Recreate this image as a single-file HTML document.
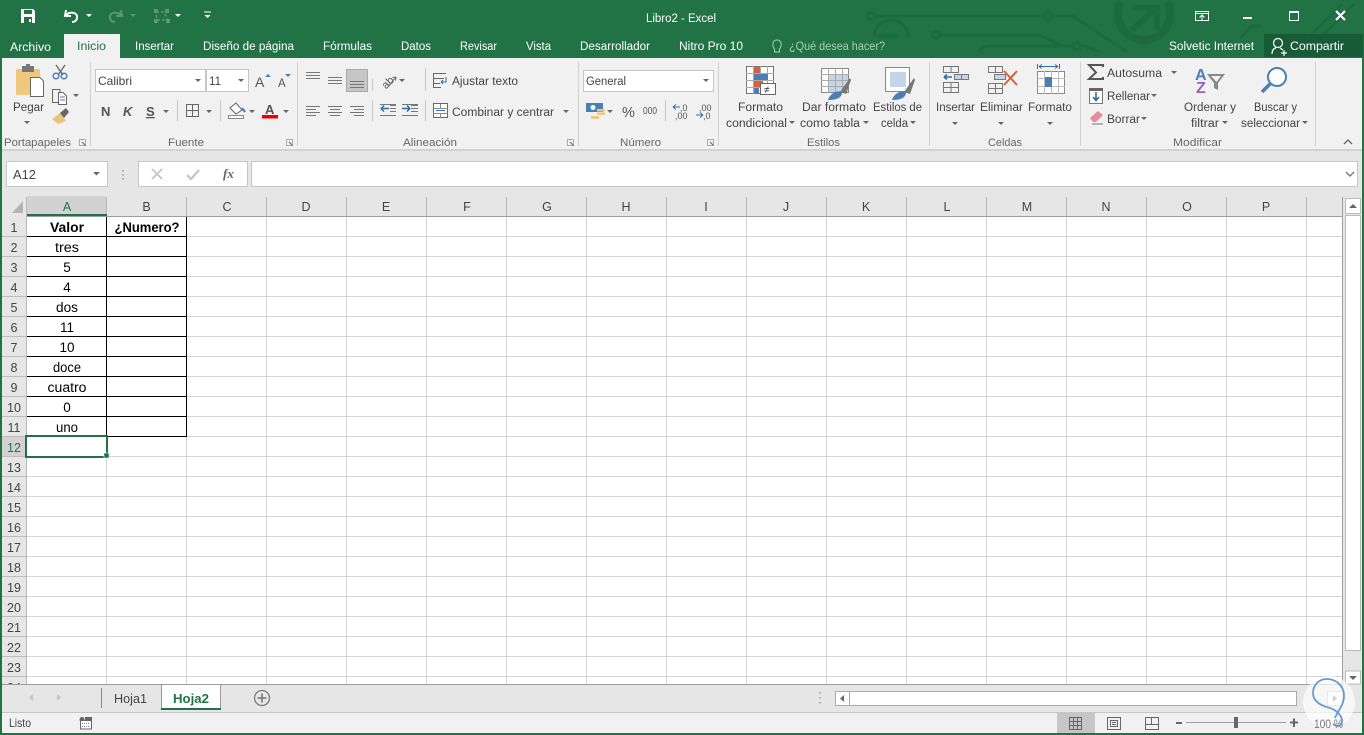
<!DOCTYPE html>
<html><head><meta charset="utf-8"><title>Libro2 - Excel</title>
<style>
html,body{margin:0;padding:0;background:#fff;overflow:hidden}
svg{display:block;font-family:"Liberation Sans",sans-serif}
.r{font-size:11.5px;fill:#444}
.g{font-size:11px;fill:#666}
.t{font-size:11.5px;fill:#fff}
.c{font-size:13.5px;fill:#000;text-anchor:middle}
.h{font-size:12.5px;fill:#444;text-anchor:middle}
.gr{fill:none;stroke:#777;stroke-width:1}
.bl{fill:none;stroke:#4a7fb5;stroke-width:1.5}
</style></head><body>
<svg width="1364" height="735" viewBox="0 0 1364 735" xmlns="http://www.w3.org/2000/svg">
<defs>
<path id="a" d="M-3 0h6l-3 3z" fill="#666"/>
<path id="w" d="M-3 0h6l-3 3z" fill="#fff"/>
<path id="ln" d="M0 .5h14M0 3.5h14M0 6.5h14" fill="none" stroke="#777"/>
</defs>
<rect width="1364" height="735" fill="#fff"/>

<!-- title bar -->
<rect width="1364" height="58" fill="#217346"/>
<g fill="none" stroke="#1e6a40" stroke-width="3">
<path d="M874 16H1045M1051 16H1073L1127 52"/><circle cx="871" cy="16" r="3.5"/><circle cx="1048" cy="16" r="3.5"/>
<path d="M940 35H1040L1062 46"/><circle cx="936" cy="35" r="3.5"/>
<path d="M979 52Q981 46 990 46H1073M1081 46H1086L1098 52"/><circle cx="1077" cy="46" r="3.5"/>
<path d="M874 37A17 17 0 0 1 908 37"/>
<path d="M878 36H898" stroke-width="4"/>
<path d="M1121 2A26 26 0 1 0 1167 2" stroke-width="8"/>
<path d="M1132 30L1155 9M1132 7.500H1157V30" stroke-width="6"/>
<path d="M1240 38L1252 26H1262M1310 36L1342 4M1322 36L1354 4"/>
</g>

<!-- QAT -->
<path d="M21 9H33L35 11V23H21Z" fill="#fff"/><rect x="24" y="10" width="8" height="4" fill="#217346"/><rect x="24" y="17" width="8" height="6" fill="#217346"/><rect x="29" y="19" width="2" height="3" fill="#fff"/>
<path d="M66 10L65 16H71M65.500 15.500C70 11 78 12 77 18C76.500 21 74 22 72 22" fill="none" stroke="#fff" stroke-width="2"/>
<use href="#w" x="89" y="14"/>
<path d="M121 10L122 16H116M121.500 15.500C117 11 109 12 110 18C110.500 21 113 22 115 22" fill="none" stroke="#5d9778" stroke-width="2"/>
<path d="M130 14h6l-3 3z" fill="#5d9778"/>
<path d="M156 12H164L168 20H157Z" fill="none" stroke="#5d9778" stroke-width="1.500" stroke-dasharray="3 2"/>
<rect x="154" y="9" width="4" height="4" fill="#5d9778"/><rect x="165" y="9" width="4" height="4" fill="#5d9778"/><rect x="154" y="19" width="4" height="4" fill="#5d9778"/><rect x="166" y="19" width="4" height="4" fill="#5d9778"/>
<use href="#w" x="178" y="14"/>
<path d="M204 12H211" stroke="#fff"/><use href="#w" x="207.500" y="15"/>

<text x="646" y="22" class="t" textLength="70" lengthAdjust="spacingAndGlyphs">Libro2 - Excel</text>
<!-- window controls -->
<rect x="1195.500" y="11.500" width="13" height="9" fill="none" stroke="#fff"/><path d="M1195 13.500H1209" stroke="#fff"/><path d="M1202 20V15M1199.500 17.500L1202 15L1204.500 17.500" fill="none" stroke="#fff"/>
<rect x="1243" y="17" width="9" height="2" fill="#fff"/>
<rect x="1289.500" y="11.500" width="9" height="9" fill="none" stroke="#fff"/><rect x="1289" y="11" width="10" height="2" fill="#fff"/>
<path d="M1336 11L1345 20M1345 11L1336 20" stroke="#fff" stroke-width="2"/>

<!-- tabs -->
<rect x="64" y="34" width="56" height="24" fill="#f1f1f1"/>
<text x="10" y="51" class="t" textLength="41" lengthAdjust="spacingAndGlyphs">Archivo</text>
<text x="77" y="50" class="t" style="fill:#217346" textLength="29" lengthAdjust="spacingAndGlyphs">Inicio</text>
<text x="135" y="50" class="t" textLength="39" lengthAdjust="spacingAndGlyphs">Insertar</text>
<text x="203" y="50" class="t" textLength="91" lengthAdjust="spacingAndGlyphs">Diseño de página</text>
<text x="323" y="50" class="t" textLength="49" lengthAdjust="spacingAndGlyphs">Fórmulas</text>
<text x="401" y="50" class="t" textLength="30" lengthAdjust="spacingAndGlyphs">Datos</text>
<text x="460" y="50" class="t" textLength="37" lengthAdjust="spacingAndGlyphs">Revisar</text>
<text x="526" y="50" class="t" textLength="25" lengthAdjust="spacingAndGlyphs">Vista</text>
<text x="580" y="50" class="t" textLength="70" lengthAdjust="spacingAndGlyphs">Desarrollador</text>
<text x="679" y="50" class="t" textLength="64" lengthAdjust="spacingAndGlyphs">Nitro Pro 10</text>
<path d="M774.500 49C772 46 772 40 777 40C782 40 782 46 779.500 49V52H774.500Z" fill="none" stroke="#a9cdb9"/>
<text x="789" y="50" class="t" style="fill:#a9cdb9" textLength="96" lengthAdjust="spacingAndGlyphs">¿Qué desea hacer?</text>
<text x="1169" y="50" class="t" textLength="85" lengthAdjust="spacingAndGlyphs">Solvetic Internet</text>
<rect x="1264" y="34" width="99" height="23" fill="#185c37"/>
<circle cx="1278" cy="43" r="4.500" fill="none" stroke="#fff" stroke-width="1.200"/><path d="M1272 54C1272 50 1274 48 1276 48M1280 48L1283 50M1281 53H1287M1284 50V56" fill="none" stroke="#fff" stroke-width="1.200"/>
<text x="1290" y="50" class="t" textLength="54" lengthAdjust="spacingAndGlyphs">Compartir</text>

<!-- ribbon -->
<rect x="0" y="58" width="1364" height="92" fill="#f1f1f1"/>
<rect x="0" y="149" width="1364" height="2" fill="#d2d2d2"/>
<rect x="0" y="151" width="1364" height="45" fill="#e6e6e6"/>
<path d="M90.500 62V146M297.500 62V146M578.500 62V146M718.500 62V146M929.500 62V146M1080.500 62V146M1315.500 62V146" stroke="#d0d0d0"/>

<!-- Portapapeles -->
<rect x="16" y="69" width="24" height="26" rx="1" fill="#efc880"/>
<rect x="22" y="66" width="12" height="6" fill="#777"/><rect x="26" y="64" width="4" height="3" fill="#777"/>
<path d="M30.500 77.500H40L43.500 81V96.500H30.500Z" fill="#fff" stroke="#666"/>
<text x="13" y="111" class="r" textLength="31" lengthAdjust="spacingAndGlyphs">Pegar</text>
<use href="#a" x="27" y="121"/>
<path d="M56 65L63 75M65 65L58 75" stroke="#666" stroke-width="1.300"/><circle cx="56" cy="76" r="2.800" class="bl" stroke-width="1.200"/><circle cx="64" cy="76" r="2.800" class="bl" stroke-width="1.200"/>
<path d="M52.500 89.500H60V102.500H52.500Z" fill="#f1f1f1" stroke="#666"/><path d="M58.500 92.500H63L66.500 96V104.500H58.500Z" fill="#fff" stroke="#666"/><path d="M60 97H65M60 100H65" stroke="#4a7fb5"/>
<use href="#a" x="76" y="94"/>
<path d="M52 119L60 113L66 121L58 124Z" fill="#e9c27b"/><path d="M60 113L66 108L69 112L64 118Z" fill="#666"/>
<text x="4" y="146" class="g" textLength="67" lengthAdjust="spacingAndGlyphs">Portapapeles</text>
<path d="M79.500 139.500H85.500V145.500H79.500Z" fill="none" stroke="#aaa"/><path d="M82 142L85.500 145.500" stroke="#666"/>

<!-- Fuente -->
<rect x="95.500" y="69.500" width="110" height="22" fill="#fff" stroke="#c6c6c6"/>
<rect x="206.500" y="69.500" width="42" height="22" fill="#fff" stroke="#c6c6c6"/>
<text x="98" y="85" class="r" style="font-size:12px" textLength="34" lengthAdjust="spacingAndGlyphs">Calibri</text>
<text x="209" y="85" class="r" style="font-size:12px" textLength="12" lengthAdjust="spacingAndGlyphs">11</text>
<use href="#a" x="198" y="79"/><use href="#a" x="241" y="79"/>
<text x="255" y="87" style="font-size:14px;fill:#555" >A</text><path d="M265 77l3-3 3 3z" fill="#4a7fb5"/>
<text x="278" y="87" style="font-size:11.500px;fill:#555">A</text><path d="M285 74h6l-3 3z" fill="#4a7fb5"/>
<text x="101" y="116" style="font-size:13px;font-weight:bold;fill:#555">N</text>
<text x="123" y="116" style="font-size:13px;font-weight:bold;font-style:italic;fill:#555">K</text>
<text x="146" y="116" style="font-size:13px;font-weight:bold;fill:#555;text-decoration:underline">S</text>
<use href="#a" x="166" y="110"/><path d="M177.500 100V121" stroke="#c6c6c6"/>
<path d="M186.500 104.500H198.500V116.500H186.500ZM192.500 104V117M186 110.500H199" fill="none" stroke="#666"/><use href="#a" x="209" y="110"/><path d="M220.500 100V121" stroke="#c6c6c6"/>
<path d="M230 108L236 103L242 110L236 114Z" fill="#fff" stroke="#666"/><path d="M242 108L245 112" stroke="#4a7fb5" stroke-width="2"/><rect x="228.500" y="115.500" width="15" height="3" fill="#fff" stroke="#888"/>
<use href="#a" x="252" y="110"/>
<text x="265" y="114" style="font-size:13px;font-weight:bold;fill:#555">A</text><rect x="262" y="115" width="16" height="3.500" fill="#e00"/>
<use href="#a" x="286" y="110"/>
<text x="168" y="146" class="g" textLength="36" lengthAdjust="spacingAndGlyphs">Fuente</text>
<path d="M286.500 139.500H292.500V145.500H286.500Z" fill="none" stroke="#aaa"/><path d="M289 142L292.500 145.500" stroke="#666"/>

<!-- Alineación -->
<use href="#ln" x="306" y="72"/><use href="#ln" x="328" y="77"/>
<rect x="346.500" y="69.500" width="21" height="22" fill="#c6c6c6" stroke="#aaa"/>
<use href="#ln" x="350" y="81"/>
<path d="M372.500 79V91M372.500 100V121M425.500 68V91M425.500 100V121" stroke="#c6c6c6"/>
<text x="380" y="87" transform="rotate(-45 386 81)" style="font-size:11px;fill:#555">ab</text><path d="M388 87L396 77M396 77l-3.500 .5M396 77l-.5 3.500" fill="none" stroke="#666"/>
<use href="#a" x="402" y="79"/>
<path d="M306 106.500H320M306 109.500H316M306 112.500H320M306 115.500H316M328 106.500H342M330 109.500H340M328 112.500H342M330 115.500H340M350 106.500H364M354 109.500H364M350 112.500H364M354 115.500H364" stroke="#777"/>
<path d="M390 105.500H396M390 108.500H396M390 111.500H396M380 115.500H396M380 104.500H396" stroke="#777"/><path d="M381 108.500H389M381 108.500l3-3M381 108.500l3 3" fill="none" stroke="#2f6ea8" stroke-width="1.500"/>
<path d="M411 105.500H418M411 108.500H418M411 111.500H418M402 115.500H418M402 104.500H418" stroke="#777"/><path d="M402 108.500H410M410 108.500l-3-3M410 108.500l-3 3" fill="none" stroke="#2f6ea8" stroke-width="1.500"/>
<path d="M433.500 73.500H446M433.500 78.500H444M433.500 83.500H440M433.500 73V87.500H441" fill="none" stroke="#666"/><path d="M446 77V82H441M441 82l2-2M441 82l2 2" fill="none" stroke="#2f6ea8"/>
<text x="452" y="85" class="r" textLength="66" lengthAdjust="spacingAndGlyphs">Ajustar texto</text>
<rect x="433.500" y="103.500" width="14" height="14" fill="#fff" stroke="#666"/><path d="M433 108.500H448M433 113.500H448M440.500 104V108M440.500 114V118" stroke="#888"/><path d="M436 110.500H445" stroke="#2f6ea8"/>
<text x="452" y="116" class="r" textLength="102" lengthAdjust="spacingAndGlyphs">Combinar y centrar</text>
<use href="#a" x="566" y="110"/>
<text x="403" y="146" class="g" textLength="54" lengthAdjust="spacingAndGlyphs">Alineación</text>
<path d="M567.500 139.500H573.500V145.500H567.500Z" fill="none" stroke="#aaa"/><path d="M570 142L573.500 145.500" stroke="#666"/>

<!-- Número -->
<rect x="583.500" y="70.500" width="130" height="21" fill="#fff" stroke="#c6c6c6"/>
<text x="586" y="85" class="r" textLength="40" lengthAdjust="spacingAndGlyphs">General</text>
<use href="#a" x="706" y="79"/>
<rect x="586" y="103" width="17" height="9" fill="#4a7fb5"/><circle cx="593" cy="107.500" r="2.500" fill="#fff"/>
<rect x="597" y="109" width="8" height="2.500" fill="#efc880"/><rect x="597" y="112.500" width="8" height="2.500" fill="#efc880"/><rect x="591" y="116" width="8" height="3" fill="#efc880"/>
<use href="#a" x="610" y="110"/>
<text x="622" y="117" style="font-size:14.500px;fill:#555">%</text>
<text x="643" y="114" style="font-size:10px;fill:#555" textLength="14" lengthAdjust="spacingAndGlyphs">000</text>
<path d="M665.500 100V121" stroke="#c6c6c6"/>
<text x="680" y="111" style="font-size:9px;fill:#555">,0</text><text x="675" y="119" style="font-size:9px;fill:#555">,00</text><path d="M673 107H680M673 107l3-2.500M673 107l3 2.500" fill="none" stroke="#2f6ea8"/>
<text x="699" y="111" style="font-size:9px;fill:#555">,00</text><text x="703" y="119" style="font-size:9px;fill:#555">,0</text><path d="M696 115H703M703 115l-3-2.500M703 115l-3 2.500" fill="none" stroke="#2f6ea8"/>
<text x="620" y="146" class="g" textLength="41" lengthAdjust="spacingAndGlyphs">Número</text>
<path d="M707.500 139.500H713.500V145.500H707.500Z" fill="none" stroke="#aaa"/><path d="M710 142L713.500 145.500" stroke="#666"/>

<!-- Estilos -->
<rect x="746.500" y="66.500" width="27" height="27" fill="#fff" stroke="#777"/>
<path d="M746 73.500H774M746 80.500H774M746 87.500H774M753.500 66V94M760.500 66V94M767.500 66V94" stroke="#aaa"/>
<rect x="754" y="67" width="6" height="6" fill="#d9603a"/><rect x="754" y="74" width="14" height="6" fill="#4a7fb5"/><rect x="754" y="81" width="9" height="6" fill="#d9603a"/><rect x="754" y="88" width="5" height="6" fill="#4a7fb5"/>
<rect x="760.500" y="83.500" width="15" height="11" fill="#fff" stroke="#666"/><text x="764" y="93" style="font-size:10px;fill:#333">≠</text>
<text x="738" y="111" class="r" textLength="45" lengthAdjust="spacingAndGlyphs">Formato</text>
<text x="726" y="127" class="r" textLength="61" lengthAdjust="spacingAndGlyphs">condicional</text><use href="#a" x="792" y="121"/>
<rect x="821.500" y="68.500" width="27" height="24" fill="#fff" stroke="#888"/><rect x="828" y="74" width="20" height="18" fill="#c5d5e8"/>
<path d="M821 74.500H849M821 80.500H849M821 86.500H849M828.500 68V93M835.500 68V93M842.500 68V93" stroke="#aaa"/>
<path d="M840 92L850 78L851 80L846 94Z" fill="#777"/><path d="M828 100C830 93 838 90 842 92C842 97 838 100 828 100Z" fill="#4a7fb5"/>
<text x="802" y="111" class="r" textLength="64" lengthAdjust="spacingAndGlyphs">Dar formato</text>
<text x="800" y="127" class="r" textLength="60" lengthAdjust="spacingAndGlyphs">como tabla</text><use href="#a" x="866" y="121"/>
<rect x="885.500" y="67.500" width="24" height="24" fill="#fff" stroke="#888"/><rect x="890" y="72" width="16" height="15" fill="#c5d5e8"/>
<path d="M904 92L914 78L915 80L910 94Z" fill="#777"/><path d="M892 100C894 93 902 90 906 92C906 97 902 100 892 100Z" fill="#4a7fb5"/>
<text x="873" y="111" class="r" textLength="49" lengthAdjust="spacingAndGlyphs">Estilos de</text>
<text x="881" y="127" class="r" textLength="27" lengthAdjust="spacingAndGlyphs">celda</text><use href="#a" x="913" y="121"/>
<text x="807" y="146" class="g" textLength="33" lengthAdjust="spacingAndGlyphs">Estilos</text>

<!-- Celdas -->
<path d="M943.500 66.500H958.500V72.500H943.500ZM951 66V72M943.500 82.500H958.500V92.500H943.500ZM951 82V93M943 87.500H959" fill="none" stroke="#777"/>
<rect x="954.500" y="74.500" width="14" height="5" fill="#c5d5e8" stroke="#777"/><path d="M961.500 74V80" stroke="#777"/><path d="M944 77H952M944 77l3-2.500M944 77l3 2.500" fill="none" stroke="#2f6ea8" stroke-width="1.500"/>
<text x="936" y="111" class="r" textLength="39" lengthAdjust="spacingAndGlyphs">Insertar</text><use href="#a" x="955" y="122"/>
<path d="M988.500 66.500H1002.500V72.500H988.500ZM995.500 66V72M988.500 83.500H1002.500V93.500H988.500ZM995.500 83V94M988 88.500H1003" fill="none" stroke="#777"/>
<rect x="994.500" y="74.500" width="11" height="5" fill="#c5d5e8" stroke="#777"/><path d="M1004 71L1017 85M1017 71L1004 85" stroke="#d9603a" stroke-width="2"/>
<text x="980" y="111" class="r" textLength="43" lengthAdjust="spacingAndGlyphs">Eliminar</text><use href="#a" x="1001" y="122"/>
<path d="M1037.500 64V69M1059.500 64V69M1039 66.500H1058M1039 66.500l3-2M1039 66.500l3 2M1058 66.500l-3-2M1058 66.500l-3 2" fill="none" stroke="#2f6ea8"/>
<rect x="1037.500" y="71.500" width="27" height="22" fill="#fff" stroke="#888"/><path d="M1037 78.500H1065M1037 86.500H1065M1044.500 71V94M1051.500 71V94M1058.500 71V94" stroke="#bbb"/><rect x="1045" y="77" width="7" height="10" fill="#4a7fb5"/>
<text x="1028" y="111" class="r" textLength="44" lengthAdjust="spacingAndGlyphs">Formato</text><use href="#a" x="1050" y="122"/>
<text x="988" y="146" class="g" textLength="34" lengthAdjust="spacingAndGlyphs">Celdas</text>

<!-- Modificar -->
<path d="M1103 67V65H1089L1096 72.500L1089 79H1103V77" fill="none" stroke="#555" stroke-width="2"/>
<text x="1107" y="77" class="r" textLength="55" lengthAdjust="spacingAndGlyphs">Autosuma</text><use href="#a" x="1174" y="71"/>
<rect x="1089.500" y="88.500" width="13" height="15" fill="#fff" stroke="#777"/><rect x="1089" y="88" width="14" height="3" fill="#666"/><path d="M1096 92V100M1093 97L1096 100.500L1099 97" fill="none" stroke="#2f6ea8" stroke-width="1.600"/>
<text x="1107" y="100" class="r" textLength="43" lengthAdjust="spacingAndGlyphs">Rellenar</text><use href="#a" x="1154" y="94"/>
<path d="M1090 118L1098 111L1103 115L1096 122H1093Z" fill="#e88c9a"/><path d="M1092 124H1103" stroke="#777"/>
<text x="1107" y="123" class="r" textLength="33" lengthAdjust="spacingAndGlyphs">Borrar</text><use href="#a" x="1144" y="117"/>
<text x="1195" y="80" style="font-size:16px;font-weight:bold;fill:#4a7fb5">A</text>
<text x="1196" y="93" style="font-size:16px;font-weight:bold;fill:#9564b8">Z</text>
<path d="M1207 74H1225L1218 83V90L1214 88V83Z" fill="#888"/><path d="M1211 76H1221L1216.500 82Z" fill="#f1f1f1"/>
<text x="1184" y="111" class="r" textLength="52" lengthAdjust="spacingAndGlyphs">Ordenar y</text>
<text x="1191" y="127" class="r" textLength="28" lengthAdjust="spacingAndGlyphs">filtrar</text><use href="#a" x="1225" y="121"/>
<circle cx="1277" cy="77" r="9" fill="#fff" stroke="#4a7fb5" stroke-width="2"/><path d="M1270 84L1262 92" stroke="#4a7fb5" stroke-width="3.500"/>
<text x="1254" y="111" class="r" textLength="43" lengthAdjust="spacingAndGlyphs">Buscar y</text>
<text x="1241" y="127" class="r" textLength="59" lengthAdjust="spacingAndGlyphs">seleccionar</text><use href="#a" x="1305" y="121"/>
<text x="1173" y="146" class="g" textLength="49" lengthAdjust="spacingAndGlyphs">Modificar</text>
<path d="M1344 144L1348 140L1352 144" fill="none" stroke="#666" stroke-width="1.300"/>

<!-- formula bar -->
<rect x="6.500" y="161.500" width="101" height="25" fill="#fff" stroke="#c6c6c6"/>
<text x="13" y="179" style="font-size:13px;fill:#444" textLength="23" lengthAdjust="spacingAndGlyphs">A12</text>
<path d="M93 172h7l-3.500 3.500z" fill="#666"/>
<path d="M123 170v1.500M123 174v1.500M123 178v1.500" stroke="#999" stroke-width="1.500"/>
<rect x="138.500" y="161.500" width="109" height="25" fill="#fff" stroke="#c6c6c6"/>
<path d="M152 169L162 179M162 169L152 179" stroke="#c4c4c4" stroke-width="1.800"/>
<path d="M187 175L191 179L199 170" fill="none" stroke="#c4c4c4" stroke-width="2.200"/>
<text x="223" y="178" style="font-family:'Liberation Serif',serif;font-size:13px;font-style:italic;font-weight:bold;fill:#666">fx</text>
<rect x="251.500" y="161.500" width="1106" height="25" fill="#fff" stroke="#c6c6c6"/>
<path d="M1346 172L1350 176L1354 172" fill="none" stroke="#777" stroke-width="1.400"/>

<!-- sheet headers -->
<rect x="2" y="196" width="1342" height="20" fill="#e6e6e6"/>
<rect x="2" y="216" width="24" height="468" fill="#e6e6e6"/>
<rect x="27" y="196" width="79" height="20" fill="#d2d2d2"/>
<rect x="2" y="437" width="24" height="20" fill="#d2d2d2"/>
<path d="M23 201V213H12Z" fill="#b4b4b4"/>
<path d="M106.500 197V216M186.500 197V216M266.500 197V216M346.500 197V216M426.500 197V216M506.500 197V216M586.500 197V216M666.500 197V216M746.500 197V216M826.500 197V216M906.500 197V216M986.500 197V216M1066.500 197V216M1146.500 197V216M1226.500 197V216M1306.500 197V216M26.500 197V684" stroke="#b8b8b8"/>
<path d="M2 236.500H26M2 256.500H26M2 276.500H26M2 296.500H26M2 316.500H26M2 336.500H26M2 356.500H26M2 376.500H26M2 396.500H26M2 416.500H26M2 436.500H26M2 456.500H26M2 476.500H26M2 496.500H26M2 516.500H26M2 536.500H26M2 556.500H26M2 576.500H26M2 596.500H26M2 616.500H26M2 636.500H26M2 656.500H26M2 676.500H26" stroke="#bdbdbd"/>
<rect x="27" y="214" width="80" height="2" fill="#217346"/>
<path d="M27 216.500H1342" stroke="#9e9e9e"/>
<rect x="27" y="217" width="1315" height="467" fill="#fff"/>
<path d="M106.500 217V684M186.500 217V684M266.500 217V684M346.500 217V684M426.500 217V684M506.500 217V684M586.500 217V684M666.500 217V684M746.500 217V684M826.500 217V684M906.500 217V684M986.500 217V684M1066.500 217V684M1146.500 217V684M1226.500 217V684M1306.500 217V684" stroke="#d4d4d4"/>
<path d="M27 236.500H1342M27 256.500H1342M27 276.500H1342M27 296.500H1342M27 316.500H1342M27 336.500H1342M27 356.500H1342M27 376.500H1342M27 396.500H1342M27 416.500H1342M27 436.500H1342M27 456.500H1342M27 476.500H1342M27 496.500H1342M27 516.500H1342M27 536.500H1342M27 556.500H1342M27 576.500H1342M27 596.500H1342M27 616.500H1342M27 636.500H1342M27 656.500H1342M27 676.500H1342" stroke="#d4d4d4"/>
<!-- black borders -->
<path d="M27 236.500H187M27 256.500H187M27 276.500H187M27 296.500H187M27 316.500H187M27 336.500H187M27 356.500H187M27 376.500H187M27 396.500H187M27 416.500H187M27 436.500H187M106.500 217V437M186.500 217V437" stroke="#000"/>
<!-- col labels -->
<text x="67" y="211" class="h" style="fill:#217346">A</text><text x="146.500" y="211" class="h">B</text><text x="227" y="211" class="h">C</text><text x="306" y="211" class="h">D</text><text x="386" y="211" class="h">E</text><text x="467" y="211" class="h">F</text><text x="547" y="211" class="h">G</text><text x="626" y="211" class="h">H</text><text x="706" y="211" class="h">I</text><text x="786" y="211" class="h">J</text><text x="866" y="211" class="h">K</text><text x="947" y="211" class="h">L</text><text x="1027" y="211" class="h">M</text><text x="1106" y="211" class="h">N</text><text x="1187" y="211" class="h">O</text><text x="1266" y="211" class="h">P</text>
<!-- row labels -->
<text x="14" y="232" class="h">1</text><text x="14" y="252" class="h">2</text><text x="14" y="272" class="h">3</text><text x="14" y="292" class="h">4</text><text x="14" y="312" class="h">5</text><text x="14" y="332" class="h">6</text><text x="14" y="352" class="h">7</text><text x="14" y="372" class="h">8</text><text x="14" y="392" class="h">9</text><text x="14" y="412" class="h">10</text><text x="14" y="432" class="h">11</text><text x="14" y="452" class="h" style="fill:#217346">12</text><text x="14" y="472" class="h">13</text><text x="14" y="492" class="h">14</text><text x="14" y="512" class="h">15</text><text x="14" y="532" class="h">16</text><text x="14" y="552" class="h">17</text><text x="14" y="572" class="h">18</text><text x="14" y="592" class="h">19</text><text x="14" y="612" class="h">20</text><text x="14" y="632" class="h">21</text><text x="14" y="652" class="h">22</text><text x="14" y="672" class="h">23</text><text x="14" y="692" class="h">24</text>
<!-- cells -->
<text x="67" y="232" class="c" style="font-weight:bold" textLength="34" lengthAdjust="spacingAndGlyphs">Valor</text>
<text x="147" y="232" class="c" style="font-weight:bold" textLength="65" lengthAdjust="spacingAndGlyphs">¿Numero?</text>
<text x="67" y="252" class="c" textLength="24" lengthAdjust="spacingAndGlyphs">tres</text>
<text x="67" y="272" class="c">5</text>
<text x="67" y="292" class="c">4</text>
<text x="67" y="312" class="c" textLength="22" lengthAdjust="spacingAndGlyphs">dos</text>
<text x="67" y="332" class="c">11</text>
<text x="67" y="352" class="c">10</text>
<text x="67" y="372" class="c" textLength="28" lengthAdjust="spacingAndGlyphs">doce</text>
<text x="67" y="392" class="c" textLength="39" lengthAdjust="spacingAndGlyphs">cuatro</text>
<text x="67" y="412" class="c">0</text>
<text x="67" y="432" class="c" textLength="22" lengthAdjust="spacingAndGlyphs">uno</text>
<!-- selection -->
<rect x="26" y="436" width="81" height="21" fill="none" stroke="#217346" stroke-width="2"/>
<rect x="104" y="453" width="5" height="5" fill="#217346" stroke="#fff" stroke-width=".5"/>

<!-- vertical scrollbar -->
<rect x="1342" y="196" width="20" height="489" fill="#e6e6e6"/>
<path d="M1342.500 197V685" stroke="#9e9e9e"/>
<rect x="1345.500" y="198.500" width="15" height="15" fill="#fff" stroke="#bbb"/><path d="M1349 208l4-4 4 4z" fill="#666"/>
<rect x="1345.500" y="215.500" width="15" height="435" fill="#fff" stroke="#bbb"/>
<rect x="1345.500" y="671" width="15" height="13" fill="#fff" stroke="#bbb"/><path d="M1349 676h8l-4 4z" fill="#666"/>

<!-- sheet tabs -->
<rect x="0" y="685" width="1364" height="28" fill="#e6e6e6"/>
<path d="M0 684.500H1343" stroke="#9e9e9e"/>
<path d="M33 694v7l-4-3.500zM57 694v7l4-3.500z" fill="#c4c4c4"/>
<path d="M101.500 688V708" stroke="#888"/>
<text x="114" y="703" style="font-size:13px;fill:#444" textLength="33" lengthAdjust="spacingAndGlyphs">Hoja1</text>
<path d="M161.500 684V710M220.500 684V710" stroke="#999"/>
<rect x="162" y="685" width="58" height="23" fill="#fff"/>
<rect x="161" y="708" width="60" height="2" fill="#217346"/>
<text x="173" y="703" style="font-size:13px;font-weight:bold;fill:#217346" textLength="36" lengthAdjust="spacingAndGlyphs">Hoja2</text>
<circle cx="262" cy="698" r="7.500" fill="none" stroke="#777" stroke-width="1.300"/><path d="M262 693.500V702.500M257.500 698H266.500" stroke="#777" stroke-width="1.600"/>
<path d="M820 692v1.500M820 697v1.500M820 702v1.500" stroke="#999" stroke-width="1.500"/>
<rect x="835.500" y="691.500" width="461" height="14" fill="#fff" stroke="#aaa"/>
<rect x="835.500" y="691.500" width="14" height="14" fill="#fff" stroke="#aaa"/><path d="M844 695v7l-4-3.500z" fill="#666"/>
<rect x="1327.500" y="691.500" width="15" height="14" fill="#fff" stroke="#bbb"/><path d="M1333 695v7l4-3.500z" fill="#666"/>

<!-- status bar -->
<rect x="0" y="713" width="1364" height="20" fill="#f1f1f1"/>
<path d="M0 712.500H1364" stroke="#c6c6c6"/>
<text x="9" y="727" style="font-size:12px;fill:#444" textLength="22" lengthAdjust="spacingAndGlyphs">Listo</text>
<circle cx="82" cy="719.500" r="2.500" fill="#666"/><rect x="80.500" y="720.500" width="11" height="8.500" fill="#fff" stroke="#666"/><rect x="85" y="717" width="7" height="3" fill="#666"/><path d="M82 723.500H90M82 726.500H90" stroke="#888" stroke-dasharray="1 1"/>
<rect x="1057" y="713" width="38" height="20" fill="#c6c6c6"/>
<path d="M1069.500 717.500H1081.500V729.500H1069.500ZM1073.500 717V730M1077.500 717V730M1069 721.500H1082M1069 725.500H1082" fill="none" stroke="#666"/>
<path d="M1107.500 717.500H1120.500V729.500H1107.500Z" fill="none" stroke="#666"/><path d="M1110.500 720.500H1117.500V726.500H1110.500ZM1112 722.500H1116M1112 724.500H1116" fill="none" stroke="#666"/>
<path d="M1145.500 717.500H1158.500V729.500H1145.500ZM1151.500 717V724M1145 724.500H1158.500" fill="none" stroke="#666"/>
<rect x="1176" y="722" width="6" height="2" fill="#666"/>
<path d="M1186 722.500H1286" stroke="#a0a0a0"/>
<rect x="1234" y="717" width="4" height="11" fill="#666"/>
<path d="M1290 722.500H1298M1294 718.500V727" stroke="#666" stroke-width="2"/>

<!-- window border -->
<rect x="0" y="58" width="2" height="677" fill="#217346"/>
<rect x="1362" y="58" width="2" height="677" fill="#217346"/>
<rect x="0" y="733" width="1364" height="2" fill="#217346"/>

<!-- watermark -->
<circle cx="1329" cy="702" r="26" fill="#fff" fill-opacity=".68"/>
<text x="1314" y="728" style="font-size:12px;fill:#777" textLength="29" lengthAdjust="spacingAndGlyphs">100 %</text>
<path d="M1335 718C1337 712 1344 705 1344 696C1344 684 1334 679 1327 679C1318 679 1313 686 1313 693C1313 702 1322 706 1330 708C1336 710 1343 716 1342 722C1341 727 1336 727 1333 724" fill="none" stroke="#5b8fcb" stroke-width="1.800" stroke-opacity=".9"/>
</svg>
</body></html>
